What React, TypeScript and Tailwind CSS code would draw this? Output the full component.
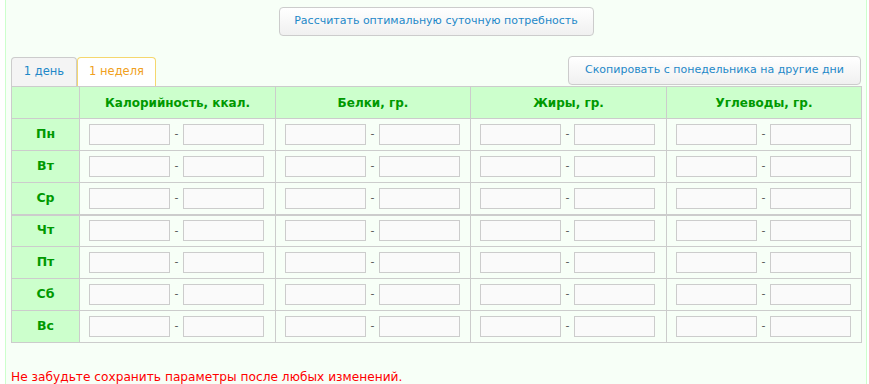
import React from 'react';

const days = ['Пн', 'Вт', 'Ср', 'Чт', 'Пт', 'Сб', 'Вс'];
const columns = ['Калорийность, ккал.', 'Белки, гр.', 'Жиры, гр.', 'Углеводы, гр.'];

const RangeInputs: React.FC = () => (
  <div className="flex items-center pl-[9px]">
    <input className="w-[81px] h-[21px] border border-[#cccccc] bg-[#fafafa] outline-none" />
    <span className="w-[13px] text-center text-[#555] text-[11px]">-</span>
    <input className="w-[81px] h-[21px] border border-[#cccccc] bg-[#fafafa] outline-none" />
  </div>
);

const App: React.FC = () => {
  return (
    <div className="w-[869px] h-[384px] bg-white pl-[5px] pr-[2px]" style={{ fontFamily: '"DejaVu Sans", Verdana, sans-serif' }}>
      <div className="h-full bg-[#f7fff7] border-x border-[#ccffcc] px-[5px]">
        <div className="flex justify-center pt-[7px]">
          <button className="h-[29px] w-[315px] rounded-[4px] border border-[#cccccc] bg-gradient-to-b from-white to-[#f0f0f0] text-[#1e88c8] text-[11px]">
            Рассчитать оптимальную суточную потребность
          </button>
        </div>

        <div className="flex items-end justify-between mt-[20px]">
          <div className="flex text-[11.5px]">
            <div className="h-[29px] w-[66px] flex items-center justify-center border border-[#cccccc] border-b-0 rounded-t-[4px] bg-[#f4f4f4] text-[#1e88c8]">
              1 день
            </div>
            <div className="h-[29px] w-[79px] flex items-center justify-center border border-[#f5d76e] border-b-0 rounded-t-[4px] bg-white text-[#f0a020]">
              1 неделя
            </div>
          </div>
          <button className="h-[29px] w-[293px] mb-[1px] rounded-[4px] border border-[#cccccc] bg-gradient-to-b from-white to-[#f0f0f0] text-[#1e88c8] text-[11px]">
            Скопировать с понедельника на другие дни
          </button>
        </div>

        <table className="border-collapse w-[850px] table-fixed">
          <colgroup>
            <col className="w-[68px]" />
            <col className="w-[196px]" />
            <col className="w-[195px]" />
            <col className="w-[196px]" />
            <col className="w-[195px]" />
          </colgroup>
          <thead>
            <tr className="h-[32px] bg-[#ccffcc]">
              <th className="border border-[#cccccc]" />
              {columns.map((c) => (
                <th key={c} className="border border-[#cccccc] text-[#009900] text-[12px] font-bold">
                  {c}
                </th>
              ))}
            </tr>
          </thead>
          <tbody>
            {days.map((d, i) => (
              <tr key={d} className={`h-[32px] ${i === 3 ? 'border-t-2 border-[#cccccc]' : ''}`}>
                <td className="border border-[#cccccc] bg-[#ccffcc] text-center text-[#009900] text-[12.5px] font-bold">{d}</td>
                {columns.map((c) => (
                  <td key={c} className="border border-[#cccccc]">
                    <RangeInputs />
                  </td>
                ))}
              </tr>
            ))}
          </tbody>
        </table>

        <p className="mt-[25px] text-[#ff0000] text-[12.2px]">
          Не забудьте сохранить параметры после любых изменений.
        </p>
      </div>
    </div>
  );
};

export default App;
